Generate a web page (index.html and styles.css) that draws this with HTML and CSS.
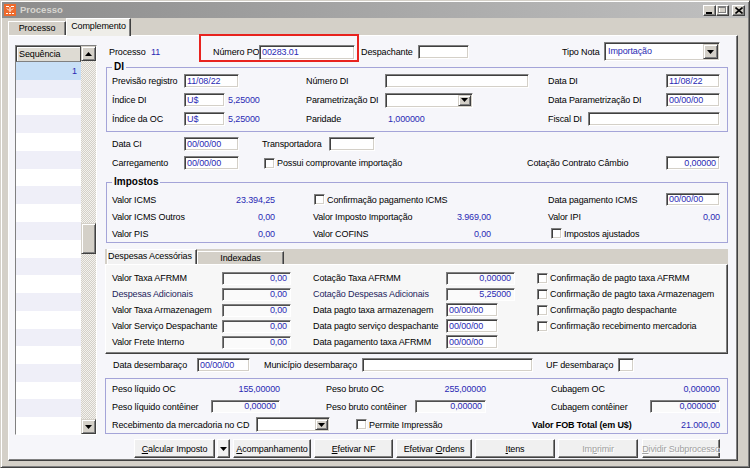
FILE: index.html
```html
<!DOCTYPE html>
<html lang="pt-BR">
<head>
<meta charset="utf-8">
<title>Processo</title>
<link rel="stylesheet" href="styles.css">
</head>
<body>
<div class="window">
  <div class="titlebar">
    <svg class="appicon" viewBox="0 0 12 12"><rect width="12" height="12" fill="#ee6a2c"/><path d="M2 2.5h3M7 2.5h3M3 4.5l2 2M9 4.5l-2 2M2 9.5h2M5 9.5h2M8 9.5h2M6 3v5" stroke="#fff" stroke-width="1" fill="none"/></svg>
    <span class="title">Processo</span>
    <div class="caption">
      <span class="cbtn"><svg width="7" height="7" viewBox="0 0 7 7"><rect x="0" y="5" width="6" height="2" fill="#000"/></svg></span>
      <span class="cbtn"><svg width="9" height="8" viewBox="0 0 9 8"><rect x="1.5" y="1.5" width="7" height="6" fill="none" stroke="#fff"/><rect x="0.5" y="0.5" width="7" height="6" fill="none" stroke="#808080"/><rect x="0.5" y="0.5" width="7" height="1.5" fill="#808080"/></svg></span>
      <span class="cbtn close"><svg width="8" height="7" viewBox="0 0 8 7"><path d="M0.5 0.5l7 6M7.5 0.5l-7 6" stroke="#000" stroke-width="1.6"/></svg></span>
    </div>
  </div>

  <div class="tabstrip">
    <div class="wtab">Processo</div>
    <div class="wtab active">Complemento</div>
  </div>

  <div class="panel">
    <div class="seqlist">
      <div class="seqcol">
        <div class="seqhead">Sequência</div>
        <div class="seqsel">1</div>
        <div class="seqrows"></div>
      </div>
      <div class="vscroll">
        <div class="sbtn"><svg width="7" height="4" viewBox="0 0 7 4"><path d="M3.5 0L7 4H0z" fill="#000"/></svg></div>
        <div class="strack"><div class="sthumb"></div></div>
        <div class="sbtn"><svg width="7" height="4" viewBox="0 0 7 4"><path d="M0 0h7L3.5 4z" fill="#000"/></svg></div>
      </div>
    </div>

    <div class="main">
      <div class="toprow">
        <span class="tr-proc">Processo</span>
        <span class="val tr-procval">11</span>
        <div class="highlight">
          <span class="hl-lbl">Número PO</span>
          <div class="fld hl-fld">00283.01</div>
        </div>
        <span class="tr-desp">Despachante</span>
        <div class="fld tr-despfld"></div>
        <span class="tr-tipo">Tipo Nota</span>
        <div class="sel tr-sel"><span>Importação</span><span class="drop"><svg width="7" height="4" viewBox="0 0 7 4"><path d="M0 0h7L3.5 4z" fill="#000"/></svg></span></div>
      </div>

      <div class="group di">
        <div class="legend">DI</div>
        <div class="di-grid">
          <span>Previsão registro</span>
          <div class="fld w55">11/08/22</div>
          <span>Número DI</span>
          <div class="fld w144"></div>
          <span>Data DI</span>
          <div class="fld w54">11/08/22</div>

          <span>Índice DI</span>
          <div class="pair"><div class="fld w41">U$</div><span class="val pv">5,25000</span></div>
          <span>Parametrização DI</span>
          <div class="sel w88"><span></span><span class="drop"><svg width="7" height="4" viewBox="0 0 7 4"><path d="M0 0h7L3.5 4z" fill="#000"/></svg></span></div>
          <span>Data Parametrização DI</span>
          <div class="fld w54">00/00/00</div>

          <span>Índice da OC</span>
          <div class="pair"><div class="fld w41">U$</div><span class="val pv">5,25000</span></div>
          <span>Paridade</span>
          <span class="val pv">1,000000</span>
          <div class="fiscal"><span class="w40">Fiscal DI</span><div class="fld w132"></div></div>
        </div>
      </div>

      <div class="line-row first">
        <span class="w72">Data CI</span>
        <div class="fld w55">00/00/00</div>
        <span class="w23"></span>
        <span class="w67">Transportadora</span>
        <div class="fld w46"></div>
      </div>
      <div class="line-row">
        <span class="w72">Carregamento</span>
        <div class="fld w55">00/00/00</div>
        <span class="w25"></span>
        <label class="chk w263"><span class="box"></span>Possui comprovante importação</label>
        <span class="w139">Cotação Contrato Câmbio</span>
        <div class="fld num w54">0,00000</div>
      </div>

      <div class="group imp">
        <div class="legend">Impostos</div>
        <div class="imp-grid">
          <span>Valor ICMS</span>
          <span class="val r">23.394,25</span>
          <label class="chk c4s3 ml1"><span class="box"></span>Confirmação pagamento ICMS</label>
          <span class="c7">Data pagamento ICMS</span>
          <div class="fld w54 short">00/00/00</div>

          <span>Valor ICMS Outros</span>
          <span class="val r">0,00</span>
          <span class="c4">Valor Imposto Importação</span>
          <span class="val r">3.969,00</span>
          <span class="c7">Valor IPI</span>
          <span class="val r">0,00</span>

          <span>Valor PIS</span>
          <span class="val r">0,00</span>
          <span class="c4">Valor COFINS</span>
          <span class="val r">0,00</span>
          <label class="chk c7s2 ml3"><span class="box"></span>Impostos ajustados</label>
        </div>
      </div>

      <div class="tabctl">
        <div class="tabbar">
          <div class="itab active">Despesas Acessórias</div>
          <div class="itab">Indexadas</div>
        </div>
        <div class="tabpage">
          <div class="tp-grid">
            <span>Valor Taxa AFRMM</span>
            <div class="fld ro num">0,00</div>
            <span class="c4">Cotação Taxa AFRMM</span>
            <div class="fld ro num">0,00000</div>
            <label class="chk c7"><span class="box"></span>Confirmação de pagto taxa AFRMM</label>

            <span class="navy">Despesas Adicionais</span>
            <div class="fld ro num">0,00</div>
            <span class="c4 navy">Cotação Despesas Adicionais</span>
            <div class="fld ro num">5,25000</div>
            <label class="chk c7"><span class="box"></span>Confirmação de pagto taxa Armazenagem</label>

            <span>Valor Taxa Armazenagem</span>
            <div class="fld ro num">0,00</div>
            <span class="c4">Data pagto taxa armazenagem</span>
            <div class="fld w52">00/00/00</div>
            <label class="chk c7"><span class="box"></span>Confirmação pagto despachante</label>

            <span>Valor Serviço Despachante</span>
            <div class="fld ro num">0,00</div>
            <span class="c4">Data pagto serviço despachante</span>
            <div class="fld w52">00/00/00</div>
            <label class="chk c7"><span class="box"></span>Confirmação recebimento mercadoria</label>

            <span>Valor Frete Interno</span>
            <div class="fld ro num">0,00</div>
            <span class="c4">Data pagamento taxa AFRMM</span>
            <div class="fld w52">00/00/00</div>
          </div>
        </div>
      </div>

      <div class="desemb-row">
        <span class="w84">Data desembaraço</span>
        <div class="fld w53">00/00/00</div>
        <span class="w14"></span>
        <span class="w98">Município desembaraço</span>
        <div class="fld w171"></div>
        <span class="w13"></span>
        <span class="w72">UF desembaraço</span>
        <div class="fld w16"></div>
      </div>

      <div class="group peso">
        <div class="peso-grid">
          <span>Peso líquido OC</span>
          <span class="val r">155,00000</span>
          <span class="c4">Peso bruto OC</span>
          <span class="val r">255,00000</span>
          <span class="c7">Cubagem OC</span>
          <span class="val r">0,000000</span>

          <span>Peso líquido contêiner</span>
          <div class="fld ro num">0,00000</div>
          <span class="c4">Peso bruto contêiner</span>
          <div class="fld ro num">0,00000</div>
          <span class="c7">Cubagem contêiner</span>
          <div class="fld ro num">0,000000</div>
        </div>
        <div class="peso-last">
          <span class="w144">Recebimento da mercadoria no CD</span>
          <div class="sel w74"><span></span><span class="drop"><svg width="7" height="4" viewBox="0 0 7 4"><path d="M0 0h7L3.5 4z" fill="#000"/></svg></span></div>
          <span class="w26"></span>
          <label class="chk w176"><span class="box"></span>Permite Impressão</label>
          <span class="w118 bold">Valor FOB Total (em U$)</span>
          <span class="val r w70">21.000,00</span>
        </div>
      </div>

      <div class="btnrow">
        <div class="btn b-calc"><span><u>C</u>alcular Imposto</span></div>
        <div class="btn b-arrow"><svg width="7" height="4" viewBox="0 0 7 4"><path d="M0 0h7L3.5 4z" fill="#000"/></svg></div>
        <div class="btn b-acomp"><span><u>A</u>companhamento</span></div>
        <div class="btn b-nf"><span><u>E</u>fetivar NF</span></div>
        <div class="btn b-ord"><span>Efetivar <u>O</u>rdens</span></div>
        <div class="btn b-itens"><span><u>I</u>tens</span></div>
        <div class="btn off b-impr"><span>Im<u>p</u>rimir</span></div>
        <div class="btn off b-div"><span><u>D</u>ividir Subprocesso</span></div>
      </div>
    </div>
  </div>
</div>
</body>
</html>
```

FILE: styles.css
```css
* { box-sizing: border-box; }
html, body { margin: 0; padding: 0; }
body {
  width: 750px;
  height: 468px;
  overflow: hidden;
  background: #d4d0c8;
  font-family: "Liberation Sans", Arial, sans-serif;
  font-size: 9px;
  letter-spacing: -0.12px;
  line-height: 12px;
  color: #000;
  white-space: nowrap;
}

/* window frame */
.window {
  width: 750px;
  height: 468px;
  display: flex;
  flex-direction: column;
  border: 1px solid;
  border-color: #d4d0c8 #404040 #404040 #d4d0c8;
  box-shadow: inset 1px 1px 0 #fff, inset -1px -1px 0 #808080;
  padding: 1px;
}
.titlebar {
  height: 16px;
  flex: none;
  display: flex;
  align-items: center;
  background: linear-gradient(90deg, #8c8c8c 0%, #a4a4a4 45%, #c0c0c0 100%);
}
.appicon { width: 12px; height: 12px; margin-left: 2px; flex: none; }
.title {
  margin-left: 4px;
  font-weight: bold;
  font-size: 9.5px;
  letter-spacing: 0;
  color: #d8d6d0;
}
.caption { margin-left: auto; margin-right: 3px; display: flex; }
.cbtn {
  width: 13px;
  height: 11px;
  display: flex;
  align-items: center;
  justify-content: center;
  background: #d4d0c8;
  border: 1px solid;
  border-color: #fff #404040 #404040 #fff;
  box-shadow: inset -1px -1px 0 #808080;
}
.cbtn.close { margin-left: 3px; }

/* outer tabs */
.tabstrip {
  height: 17px;
  flex: none;
  display: flex;
  align-items: flex-end;
  padding-left: 6px;
}
.wtab {
  width: 58px;
  height: 14px;
  text-align: center;
  line-height: 13px;
  background: #d4d0c8;
  border: 1px solid;
  border-bottom: 0;
  border-color: #fff #404040 transparent #fff;
  box-shadow: inset -1px 0 0 #808080;
}
.wtab.active {
  width: 65px;
  height: 18px;
  line-height: 15px;
  margin-bottom: -1px;
  background: #eeede8;
  position: relative;
  z-index: 1;
}

.panel {
  width: 730px;
  height: 426px;
  margin-left: 6px;
  flex: none;
  display: flex;
  align-items: flex-start;
  background: #f6f6fa;
  border: 1px solid;
  border-color: #fff #404040 #404040 #fff;
  box-shadow: inset -1px -1px 0 #808080;
}

/* sequence list */
.seqlist {
  width: 82px;
  height: 390px;
  margin: 9px 0 0 6px;
  flex: none;
  display: flex;
  background: #fff;
  border: 1px solid;
  border-color: #808080 #fff #fff #808080;
  box-shadow: inset 1px 1px 0 #404040;
}
.seqcol { width: 65px; display: flex; flex-direction: column; }
.seqhead {
  height: 16px;
  flex: none;
  padding-left: 2px;
  line-height: 14px;
  background: #dedbd3;
  border: 1px solid;
  border-color: #404040 #404040 #808080 #404040;
  box-shadow: inset 1px 1px 0 #fff;
}
.seqsel {
  height: 18px;
  flex: none;
  background: #c8dff6;
  color: #2a2ab4;
  text-align: right;
  padding-right: 4px;
  line-height: 18px;
}
.seqrows {
  flex: 1;
  background: repeating-linear-gradient(180deg, #efeff8 0 17.75px, #fff 17.75px 35.5px);
}
.vscroll { width: 15px; display: flex; flex-direction: column; }
.sbtn {
  width: 15px;
  height: 15px;
  flex: none;
  display: flex;
  align-items: center;
  justify-content: center;
  background: #d4d0c8;
  border: 1px solid;
  border-color: #d4d0c8 #404040 #404040 #d4d0c8;
  box-shadow: inset 1px 1px 0 #fff, inset -1px -1px 0 #808080;
}
.strack {
  flex: 1;
  background: repeating-conic-gradient(#d4d0c8 0 25%, #f3f2ee 0 50%) 0 0 / 2px 2px;
}
.sthumb {
  width: 15px;
  height: 31px;
  margin-top: 162px;
  background: #d4d0c8;
  border: 1px solid;
  border-color: #d4d0c8 #404040 #404040 #d4d0c8;
  box-shadow: inset 1px 1px 0 #fff, inset -1px -1px 0 #808080;
}

/* main column */
.main {
  width: 624px;
  margin-left: 8px;
  display: flex;
  flex-direction: column;
}

/* generic controls */
.val { color: #2a2ab4; }
.r { text-align: right; }
.bold { font-weight: bold; }
.navy { color: #1c1c5c; }
.fld {
  height: 14px;
  flex: none;
  background: #fff;
  border: 1px solid;
  border-color: #808080 #fff #fff #808080;
  box-shadow: inset 1px 1px 0 #404040, inset -1px -1px 0 #d4d0c8;
  color: #2a2ab4;
  padding: 0 3px 0 2px;
  line-height: 12px;
  overflow: hidden;
}
.fld.short { height: 13px; line-height: 11px; }
.fld.num { text-align: right; }
.fld.ro {
  background: #fafafa;
  height: 13px;
  line-height: 11px;
  border-color: #808080 #fff #fff #808080;
  box-shadow: inset 1px 1px 0 #505050;
}
.sel {
  height: 15px;
  flex: none;
  display: flex;
  align-items: stretch;
  background: #fff;
  border: 1px solid;
  border-color: #808080 #fff #fff #808080;
  box-shadow: inset 1px 1px 0 #404040, inset -1px -1px 0 #d4d0c8;
  color: #2a2ab4;
  padding: 1px 1px 1px 3px;
  line-height: 11px;
}
.sel .drop {
  margin-left: auto;
  width: 13px;
  display: flex;
  align-items: center;
  justify-content: center;
  background: #d4d0c8;
  border: 1px solid;
  border-color: #d4d0c8 #404040 #404040 #d4d0c8;
  box-shadow: inset 1px 1px 0 #fff, inset -1px -1px 0 #808080;
}
.chk { display: flex; align-items: center; }
.chk .box {
  width: 11px;
  height: 11px;
  flex: none;
  margin-right: 2px;
  background: #fff;
  border: 1px solid;
  border-color: #808080 #fff #fff #808080;
  box-shadow: inset 1px 1px 0 #404040, inset -1px -1px 0 #d4d0c8;
}

/* widths */
.w13 { width: 13px; flex: none; }
.w14 { width: 14px; flex: none; }
.w16 { width: 16px; }
.w23 { width: 23px; flex: none; }
.w25 { width: 25px; flex: none; }
.w26 { width: 26px; flex: none; }
.w40 { width: 40px; flex: none; }
.w41 { width: 41px; }
.w46 { width: 46px; }
.w52 { width: 52px; }
.w53 { width: 53px; }
.w54 { width: 54px; }
.w55 { width: 55px; }
.w67 { width: 67px; flex: none; }
.w70 { width: 70px; flex: none; }
.w72 { width: 72px; flex: none; }
.w74 { width: 74px; }
.w84 { width: 84px; flex: none; }
.w88 { width: 88px; }
.w98 { width: 98px; flex: none; }
.w118 { width: 118px; flex: none; }
.w132 { width: 132px; }
.w139 { width: 139px; flex: none; }
.w144 { width: 144px; flex: none; }
.w171 { width: 171px; }
.w176 { width: 176px; flex: none; }
.w263 { width: 263px; flex: none; }
.ml1 { margin-left: 1px; }
.ml3 { margin-left: 3px; }
.c4 { grid-column: 4; }
.c7 { grid-column: 7; }
.c4s3 { grid-column: 4 / 7; }
.c7s2 { grid-column: 7 / 9; }

/* top row */
.toprow {
  height: 31px;
  flex: none;
  display: flex;
  align-items: center;
  padding-left: 4px;
}
.tr-proc { width: 42px; flex: none; }
.tr-procval { width: 48px; flex: none; }
.highlight {
  align-self: flex-start;
  margin-top: -2px;
  width: 160px;
  height: 28px;
  flex: none;
  display: flex;
  align-items: center;
  padding: 9px 2px 1px 12px;
  border: 2px solid #e8231f;
}
.hl-lbl { width: 46px; flex: none; }
.hl-fld { width: 96px; height: 15px; line-height: 13px; }
.tr-desp { width: 57px; margin-left: 2px; flex: none; }
.tr-despfld { width: 51px; }
.tr-tipo { width: 42px; margin-left: 93px; flex: none; }
.tr-sel { width: 116px; height: 19px; line-height: 15px; }
.tr-sel .drop { width: 15px; }

/* groups */
.group {
  flex: none;
  border: 1px solid #a4a4d8;
}
.legend {
  width: max-content;
  height: 12px;
  margin: -7px 0 -5px 0;
  padding: 0 2px;
  background: #f6f6fa;
  font-weight: bold;
  font-size: 10px;
  letter-spacing: 0;
  line-height: 12px;
}
.di {
  width: 622px;
  margin-left: 1px;
  padding: 0 0 3px 5px;
}
.di-grid {
  margin-top: 4px;
  display: grid;
  grid-template-columns: 72px 122px 79px 163px 118px 54px;
  grid-auto-rows: 18px;
  row-gap: 1px;
  align-items: center;
}
.pair { display: flex; align-items: center; }
.pv { padding-left: 3px; }
.fiscal { grid-column: 5 / 7; display: flex; align-items: center; }

.line-row {
  height: 18px;
  flex: none;
  display: flex;
  align-items: center;
  padding-left: 7px;
  margin-top: 1px;
}
.line-row.first { margin-top: 3px; }

.imp {
  width: 622px;
  margin: 10px 0 0 1px;
  padding: 0 0 0 5px;
}
.imp-grid {
  margin-top: 8px;
  display: grid;
  grid-template-columns: 96px 67px 38px 120px 58px 57px 118px 54px;
  grid-auto-rows: 17px;
  align-items: center;
}

/* inner tab control */
.tabctl { width: 623px; margin-top: 6px; flex: none; }
.tabbar {
  height: 15px;
  display: flex;
  align-items: flex-end;
  padding-left: 2px;
  background: #d4d0c8;
}
.itab {
  width: 87px;
  height: 13px;
  text-align: center;
  line-height: 12px;
  background: #d4d0c8;
  border: 1px solid;
  border-bottom: 0;
  border-color: #fff #404040 transparent #fff;
  box-shadow: inset -1px 0 0 #808080;
}
.itab.active {
  width: 90px;
  height: 15px;
  line-height: 13px;
  background: #f2f2f2;
  padding-right: 4px;
}
.tabpage {
  height: 90px;
  background: #f7f7f7;
  border: 1px solid;
  border-color: #fff #404040 #404040 #fff;
  box-shadow: inset -1px -1px 0 #808080;
  padding: 5px 0 0 6px;
}
.tp-grid {
  display: grid;
  grid-template-columns: 110px 69px 22px 133px 69px 22px 1fr;
  grid-auto-rows: 16px;
  align-items: center;
}

.desemb-row {
  height: 16px;
  flex: none;
  margin-top: 3px;
  display: flex;
  align-items: center;
  padding-left: 8px;
}

.peso {
  width: 623px;
  margin-top: 5px;
  padding: 1px 0 0 6px;
}
.peso-grid {
  display: grid;
  grid-template-columns: 99px 69px 46px 89px 71px 65px 99px 70px;
  grid-template-rows: 17px 19px;
  align-items: center;
}
.peso-last {
  height: 17px;
  display: flex;
  align-items: center;
}

/* buttons */
.btnrow {
  height: 19px;
  flex: none;
  margin-top: 5px;
  padding-left: 29px;
  display: flex;
}
.btn {
  height: 19px;
  flex: none;
  display: flex;
  align-items: center;
  justify-content: center;
  background: #f0f0f0;
  border: 1px solid;
  border-color: #fff #404040 #404040 #fff;
  box-shadow: inset -1px -1px 0 #808080;
}
.btn.off { color: #a0a0a0; text-shadow: 1px 1px 0 #fff; }
.b-calc { width: 81px; }
.b-arrow { width: 13px; margin-left: 2px; }
.b-acomp { width: 78px; margin-left: 3px; }
.b-nf { width: 79px; margin-left: 3px; }
.b-ord { width: 76px; margin-left: 3px; }
.b-itens { width: 80px; margin-left: 3px; }
.b-impr { width: 80px; margin-left: 3px; }
.b-div { width: 78px; margin-left: 4px; }
```
